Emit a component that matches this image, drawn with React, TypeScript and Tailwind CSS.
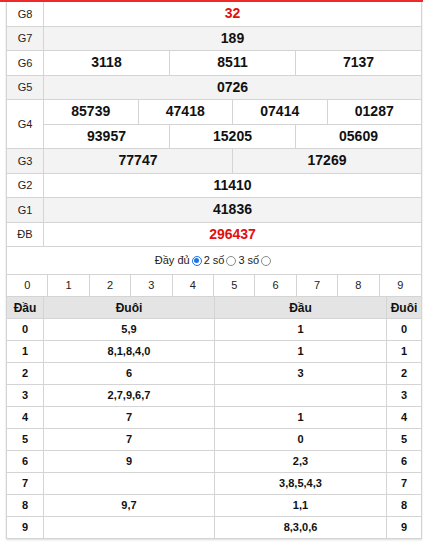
import React from "react";

const font = { fontFamily: '"Liberation Sans", Arial, sans-serif' };

type Row = { label: string; lines: { vals: string[]; red?: boolean }[]; grey: boolean };

const rows: Row[] = [
  { label: "G8", lines: [{ vals: ["32"], red: true }], grey: false },
  { label: "G7", lines: [{ vals: ["189"] }], grey: true },
  { label: "G6", lines: [{ vals: ["3118", "8511", "7137"] }], grey: false },
  { label: "G5", lines: [{ vals: ["0726"] }], grey: true },
  { label: "G4", lines: [{ vals: ["85739", "47418", "07414", "01287"] }, { vals: ["93957", "15205", "05609"] }], grey: false },
  { label: "G3", lines: [{ vals: ["77747", "17269"] }], grey: true },
  { label: "G2", lines: [{ vals: ["11410"] }], grey: false },
  { label: "G1", lines: [{ vals: ["41836"] }], grey: true },
  { label: "ĐB", lines: [{ vals: ["296437"], red: true }], grey: false },
];

const dauDuoi: [string, string, string, string][] = [
  ["0", "5,9", "1", "0"],
  ["1", "8,1,8,4,0", "1", "1"],
  ["2", "6", "3", "2"],
  ["3", "2,7,9,6,7", "", "3"],
  ["4", "7", "1", "4"],
  ["5", "7", "0", "5"],
  ["6", "9", "2,3", "6"],
  ["7", "", "3,8,5,4,3", "7"],
  ["8", "9,7", "1,1", "8"],
  ["9", "", "8,3,0,6", "9"],
];

function Radio({ checked }: { checked?: boolean }) {
  return (
    <span
      className={
        "inline-flex items-center justify-center w-[10px] h-[10px] rounded-full border mx-[2px] " +
        (checked ? "border-[#1a73e8]" : "border-[#8a8a8a]")
      }
    >
      {checked && <span className="w-[5px] h-[5px] rounded-full bg-[#1a73e8]" />}
    </span>
  );
}

export default function App() {
  return (
    <div className="w-[423px] h-[545px] bg-white text-[#222]" style={font}>
      <div className="h-[2px] bg-[#ee2b2b]" />
      <div className="ml-[6px] w-[416px] border-x border-[#d4d4d4] shadow-[0_1px_2px_rgba(0,0,0,0.15)]">
        {rows.map((r) => (
          <div
            key={r.label}
            className={"flex border-b border-[#d4d4d4] " + (r.grey ? "bg-[#f3f3f3]" : "bg-white")}
          >
            <div className="w-[37px] shrink-0 flex items-center justify-center border-r border-[#d4d4d4] text-[11px]">
              {r.label}
            </div>
            <div className="flex-1 flex flex-col">
              {r.lines.map((l, i) => (
                <div
                  key={i}
                  className={
                    "flex " +
                    (i < r.lines.length - 1 ? "h-[24.5px] border-b border-[#d4d4d4]" : "h-[23.5px]")
                  }
                >
                  {l.vals.map((v, j) => (
                    <div
                      key={j}
                      className={
                        "flex-1 flex items-center justify-center font-bold text-[14px] " +
                        (j < l.vals.length - 1 ? "border-r border-[#d4d4d4] " : "") +
                        (l.red ? "text-[#e10f0f]" : "text-[#111]")
                      }
                    >
                      {v}
                    </div>
                  ))}
                </div>
              ))}
            </div>
          </div>
        ))}
        <div className="h-[27px] flex items-center justify-center text-[11px] text-[#222]">
          <span>Đầy đủ</span>
          <Radio checked />
          <span>2 số</span>
          <Radio />
          <span>3 số</span>
          <Radio />
        </div>
        <div className="grid grid-cols-10 border-y border-[#d4d4d4] h-[23px]">
          {Array.from({ length: 10 }, (_, i) => (
            <div
              key={i}
              className={
                "flex items-center justify-center text-[11px] " + (i < 9 ? "border-r border-[#d4d4d4]" : "")
              }
            >
              {i}
            </div>
          ))}
        </div>
        <div className="grid grid-cols-[37px_171px_172px_1fr] text-[11px] font-bold text-[#111]">
          {["Đầu", "Đuôi", "Đầu", "Đuôi"].map((h, i) => (
            <div
              key={"h" + i}
              className={
                "h-[22px] flex items-center justify-center bg-[#e4e4e4] text-[12px] border-b border-[#d4d4d4] " +
                (i < 3 ? "border-r border-[#d4d4d4]" : "")
              }
            >
              {h}
            </div>
          ))}
          {dauDuoi.map((row, ri) =>
            row.map((c, ci) => (
              <div
                key={ri + "-" + ci}
                className={
                  "h-[22px] flex items-center justify-center border-b border-[#d4d4d4] " +
                  (ci < 3 ? "border-r border-[#d4d4d4]" : "")
                }
              >
                {c}
              </div>
            ))
          )}
        </div>
      </div>
    </div>
  );
}
